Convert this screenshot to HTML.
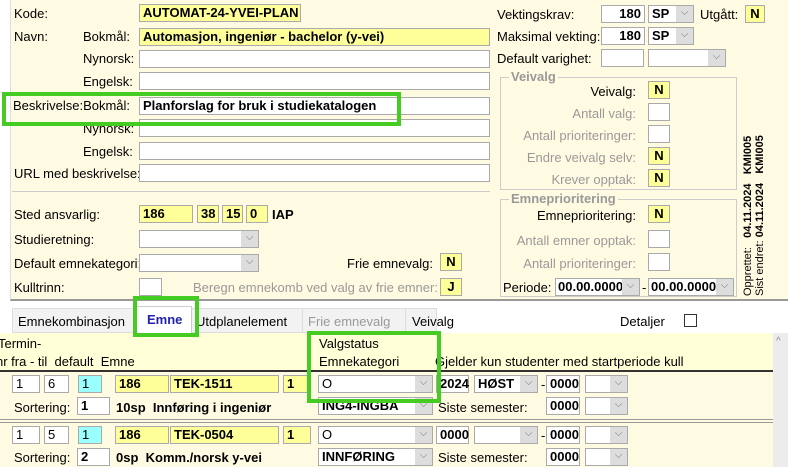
<!DOCTYPE html><html><head><style>
*{box-sizing:border-box;margin:0;padding:0}
body{width:788px;height:467px;overflow:hidden;background:#fff;font-family:"Liberation Sans",sans-serif;font-size:13px;color:#000;position:relative}
.a{position:absolute;white-space:nowrap}
.top{position:absolute;left:10px;top:0;width:778px;height:301px;background:#fffbe3;border-left:1px solid #ddd;border-bottom:2px solid #999}
.i{position:absolute;height:18px;background:#fff;border:1px solid #aaa;font-weight:bold;padding-left:3px;line-height:16px;white-space:nowrap}
.n{font-weight:normal}
.y{background:#ffff99}
.c{background:#99ffff}
.g{color:#999}
.s{position:absolute;height:18px;background:#fff;border:1px solid #aaa}
.s:after{content:"⌵";position:absolute;right:0;top:0;width:17px;height:16px;background:#ddd;color:#777;font-size:10px;text-align:center;line-height:14px}
.fs{position:absolute;border:1px solid #ccc}
.fs b{position:absolute;top:-9px;left:8px;background:#fffbe3;color:#999;padding:0 2px}
.gr{position:absolute;border:4px solid #44cc22}
.r{text-align:right}
</style></head><body>
<div class="top"></div>
<div class="a" style="left:14px;top:6px">Kode:</div><div class="i y" style="left:139px;top:4px;width:162px">AUTOMAT-24-YVEI-PLAN</div>
<div class="a" style="left:14px;top:29px">Navn:</div><div class="a" style="left:83px;top:29px">Bokmål:</div><div class="i y" style="left:139px;top:28px;width:351px">Automasjon, ingeniør - bachelor (y-vei)</div>
<div class="a" style="left:83px;top:51px">Nynorsk:</div><div class="i" style="left:139px;top:50px;width:351px"></div>
<div class="a" style="left:83px;top:74px">Engelsk:</div><div class="i" style="left:139px;top:72px;width:351px"></div>
<div class="a" style="left:13px;top:98px">Beskrivelse:Bokmål:</div><div class="i" style="left:139px;top:97px;width:351px">Planforslag for bruk i studiekatalogen</div>
<div class="a" style="left:83px;top:121px">Nynorsk:</div><div class="i" style="left:139px;top:119px;width:351px"></div>
<div class="a" style="left:83px;top:144px">Engelsk:</div><div class="i" style="left:139px;top:142px;width:351px"></div>
<div class="a" style="left:14px;top:166px">URL med beskrivelse:</div><div class="i" style="left:139px;top:164px;width:351px"></div>
<div class="a" style="left:12px;top:191px;width:478px;border-top:1px solid #ccc"></div>
<div class="a" style="left:14px;top:207px">Sted ansvarlig:</div>
<div class="i y" style="left:139px;top:205px;width:54px">186</div><div class="i y" style="left:197px;top:205px;width:22px">38</div><div class="i y" style="left:222px;top:205px;width:21px">15</div><div class="i y" style="left:246px;top:205px;width:22px">0</div><div class="a" style="left:272px;top:207px;font-weight:bold">IAP</div>
<div class="a" style="left:14px;top:232px">Studieretning:</div><div class="s" style="left:139px;top:230px;width:120px"></div>
<div class="a" style="left:14px;top:256px">Default emnekategori:</div><div class="s" style="left:139px;top:254px;width:120px"></div>
<div class="a" style="left:347px;top:256px">Frie emnevalg:</div><div class="i y" style="left:440px;top:253px;width:22px;text-align:center;padding:0">N</div>
<div class="a" style="left:14px;top:280px">Kulltrinn:</div><div class="i" style="left:139px;top:278px;width:23px"></div>
<div class="a g" style="left:193px;top:280px">Beregn emnekomb ved valg av frie emner:</div><div class="i y" style="left:440px;top:278px;width:22px;text-align:center;padding:0">J</div>
<div class="a" style="left:497px;top:7px">Vektingskrav:</div><div class="i r" style="left:601px;top:5px;width:44px;padding-right:3px">180</div><div class="s" style="left:648px;top:5px;width:46px"><b style="padding-left:3px">SP</b></div><div class="a" style="left:700px;top:7px">Utgått:</div><div class="i y" style="left:745px;top:5px;width:20px;text-align:center;padding:0">N</div>
<div class="a" style="left:497px;top:29px">Maksimal vekting:</div><div class="i r" style="left:601px;top:27px;width:44px;padding-right:3px">180</div><div class="s" style="left:648px;top:27px;width:46px"><b style="padding-left:3px">SP</b></div>
<div class="a" style="left:497px;top:51px">Default varighet:</div><div class="i" style="left:601px;top:49px;width:43px"></div><div class="s" style="left:648px;top:49px;width:78px"></div>
<div class="fs" style="left:500px;top:77px;width:237px;height:113px"><b>Veivalg</b></div>
<div class="a r" style="left:500px;top:84px;width:136px">Veivalg:</div><div class="i y" style="left:648px;top:81px;width:22px;text-align:center;padding:0">N</div>
<div class="a r g" style="left:500px;top:106px;width:136px">Antall valg:</div><div class="i" style="left:648px;top:103px;width:22px"></div>
<div class="a r g" style="left:500px;top:128px;width:136px">Antall prioriteringer:</div><div class="i" style="left:648px;top:125px;width:22px"></div>
<div class="a r g" style="left:500px;top:150px;width:136px">Endre veivalg selv:</div><div class="i y" style="left:648px;top:147px;width:22px;text-align:center;padding:0">N</div>
<div class="a r g" style="left:500px;top:172px;width:136px">Krever opptak:</div><div class="i y" style="left:648px;top:169px;width:22px;text-align:center;padding:0">N</div>
<div class="fs" style="left:500px;top:199px;width:237px;height:98px"><b>Emneprioritering</b></div>
<div class="a r" style="left:500px;top:208px;width:136px">Emneprioritering:</div><div class="i y" style="left:648px;top:205px;width:22px;text-align:center;padding:0">N</div>
<div class="a r g" style="left:500px;top:233px;width:136px">Antall emner opptak:</div><div class="i" style="left:648px;top:230px;width:22px"></div>
<div class="a r g" style="left:500px;top:256px;width:136px">Antall prioriteringer:</div><div class="i" style="left:648px;top:253px;width:22px"></div>
<div class="a" style="left:503px;top:280px">Periode:</div><div class="s" style="left:555px;top:278px;width:85px"><b style="padding-left:2px">00.00.0000</b></div><div class="a" style="left:642px;top:280px">-</div><div class="s" style="left:648px;top:278px;width:86px"><b style="padding-left:2px">00.00.0000</b></div>
<div class="a" style="left:742px;top:296px;transform:rotate(-90deg);transform-origin:0 0;font-size:11px;line-height:12px">Opprettet:&nbsp;&nbsp; <b>04.11.2024&nbsp;&nbsp; KMI005</b><br>Sist endret: <b>04.11.2024&nbsp;&nbsp; KMI005</b></div>
<div class="a" style="left:0;top:303px;width:788px;height:30px;background:#fff"></div>
<div class="a" style="left:12px;top:308px;width:425px;height:25px;background:#f2f2f2;border:1px solid #ddd"></div>
<div class="a" style="left:18px;top:314px">Emnekombinasjon</div>
<div class="a" style="left:136px;top:306px;width:56px;height:28px;background:#fff;border:1px solid #ccc;border-bottom:none"></div>
<div class="a" style="left:147px;top:312px;color:#2222aa;font-weight:bold">Emne</div>
<div class="a" style="left:196px;top:314px">Utdplanelement</div>
<div class="a" style="left:302px;top:308px;height:25px;border-left:1px solid #ddd"></div>
<div class="a g" style="left:308px;top:314px">Frie emnevalg</div>
<div class="a" style="left:405px;top:308px;height:25px;border-left:1px solid #ddd"></div>
<div class="a" style="left:412px;top:314px">Veivalg</div>
<div class="a" style="left:620px;top:314px">Detaljer</div><div class="a" style="left:684px;top:314px;width:13px;height:13px;border:1px solid #333;background:#fff"></div>
<div class="a" style="left:0;top:333px;width:773px;height:134px;background:#fffbe3"></div>
<div class="a" style="left:0;top:333px;width:773px;height:39px;background:#ffffd8;border-bottom:2px solid #333"></div>
<div class="a" style="left:773px;top:333px;width:15px;height:134px;background:#ececec"></div>
<div class="a" style="left:776px;top:336px;color:#888;font-size:10px">^</div>
<div class="a" style="left:-2px;top:336px">Termin-</div>
<div class="a" style="left:-4px;top:354px">nr fra - til&nbsp; default&nbsp; Emne</div>
<div class="a" style="left:319px;top:336px">Valgstatus</div><div class="a" style="left:319px;top:354px">Emnekategori</div>
<div class="a" style="left:435px;top:354px">Gjelder kun studenter med startperiode kull</div>
<div class="i n" style="left:12px;top:375px;width:28px">1</div><div class="i n" style="left:44px;top:375px;width:25px">6</div><div class="i c n" style="left:78px;top:375px;width:24px">1</div>
<div class="i y" style="left:115px;top:375px;width:54px">186</div><div class="i y" style="left:170px;top:375px;width:109px">TEK-1511</div><div class="i y" style="left:283px;top:375px;width:28px">1</div>
<div class="s" style="left:318px;top:375px;width:115px"><span style="padding-left:3px">O</span></div>
<div class="i" style="left:436px;top:375px;width:33px">2024</div><div class="s" style="left:474px;top:375px;width:64px"><b style="padding-left:3px">HØST</b></div><div class="a" style="left:541px;top:377px">-</div><div class="i" style="left:546px;top:375px;width:34px">0000</div><div class="s" style="left:585px;top:375px;width:43px"></div>
<div class="a" style="left:14px;top:400px">Sortering:</div><div class="i" style="left:77px;top:397px;width:33px">1</div><div class="a" style="left:116px;top:400px;font-weight:bold">10sp&nbsp; Innføring i ingeniør</div>
<div class="s" style="left:318px;top:397px;width:115px"><b style="padding-left:3px">ING4-INGBA</b></div><div class="a" style="left:438px;top:400px">Siste semester:</div><div class="i" style="left:546px;top:397px;width:34px">0000</div><div class="s" style="left:585px;top:397px;width:43px"></div>
<div class="a" style="left:0;top:419px;width:773px;height:4px;border-top:1px solid #999;border-bottom:1px solid #999"></div>
<div class="i n" style="left:12px;top:426px;width:28px">1</div><div class="i n" style="left:44px;top:426px;width:25px">5</div><div class="i c n" style="left:78px;top:426px;width:24px">1</div>
<div class="i y" style="left:115px;top:426px;width:54px">186</div><div class="i y" style="left:170px;top:426px;width:109px">TEK-0504</div><div class="i y" style="left:283px;top:426px;width:28px">1</div>
<div class="s" style="left:318px;top:426px;width:115px"><span style="padding-left:3px">O</span></div>
<div class="i" style="left:436px;top:426px;width:33px">0000</div><div class="s" style="left:474px;top:426px;width:64px"></div><div class="a" style="left:541px;top:428px">-</div><div class="i" style="left:546px;top:426px;width:34px">0000</div><div class="s" style="left:585px;top:426px;width:43px"></div>
<div class="a" style="left:14px;top:450px">Sortering:</div><div class="i" style="left:77px;top:448px;width:33px">2</div><div class="a" style="left:116px;top:450px;font-weight:bold">0sp&nbsp; Komm./norsk y-vei</div>
<div class="s" style="left:318px;top:448px;width:115px"><b style="padding-left:3px">INNFØRING</b></div><div class="a" style="left:438px;top:450px">Siste semester:</div><div class="i" style="left:546px;top:448px;width:34px">0000</div><div class="s" style="left:585px;top:448px;width:43px"></div>
<div class="gr" style="left:2px;top:92px;width:399px;height:34px"></div>
<div class="gr" style="left:133px;top:296px;width:66px;height:41px"></div>
<div class="gr" style="left:307px;top:331px;width:134px;height:72px"></div>
</body></html>
